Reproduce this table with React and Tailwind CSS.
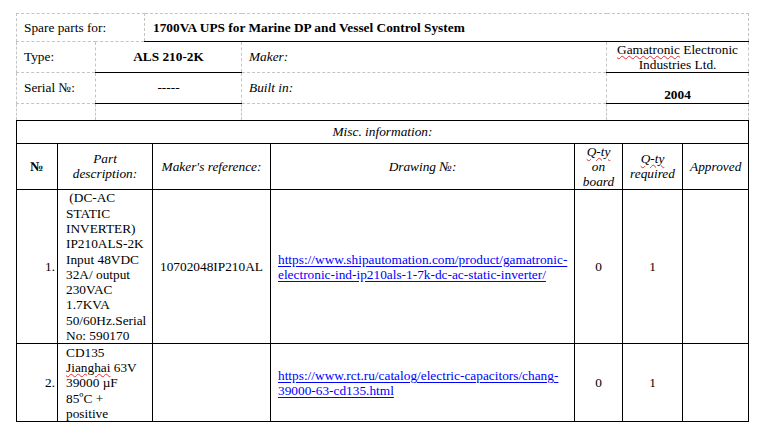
import React from "react";

// Word-style spare parts sheet: dashed gridline header block + solid parts table
const dash = "border border-dashed border-[#c4c4c4] px-[7px] align-middle";
const solidBottom = "[border-bottom-style:solid]! border-b-black";
const cell = "border border-black px-[7px] align-middle";

const Wavy = ({ children }) => (
  <span className="underline decoration-wavy decoration-[#e03030] decoration-[1px] underline-offset-[1px]">
    {children}
  </span>
);

const parts = [
  {
    no: "1.",
    desc: ["\u00a0(DC-AC", "STATIC", "INVERTER)", "IP210ALS-2K", "Input 48VDC", "32A/ output", "230VAC", "1.7KVA", "50/60Hz.Serial", "No: 590170"],
    ref: "10702048IP210AL",
    link: ["https://www.shipautomation.com/product/gamatronic-", "electronic-ind-ip210als-1-7k-dc-ac-static-inverter/"],
    onBoard: 0,
    required: 1,
    h: "h-[154px]",
  },
  {
    no: "2.",
    desc: ["CD135", <><Wavy>Jianghai</Wavy> 63V</>, "39000 µF", "85ºC +", "positive"],
    ref: "",
    link: ["https://www.rct.ru/catalog/electric-capacitors/chang-", "39000-63-cd135.html"],
    onBoard: 0,
    required: 1,
    h: "h-[78px]",
  },
];

export default function App() {
  return (
    <div className="w-[759px] h-[443px] bg-white pl-4 pt-[13px] font-['Liberation_Serif',serif] text-[13.33px] leading-[15.3px] text-black">
      <table className="w-[732px] table-fixed border-collapse">
        <colgroup>
          <col className="w-[79px]" />
          <col className="w-[49px]" />
          <col className="w-[97px]" />
          <col className="w-[365px]" />
          <col className="w-[142px]" />
        </colgroup>
        <tbody>
          <tr className="h-[28px]">
            <td colSpan={2} className={dash}>Spare parts for:</td>
            <td colSpan={3} className={`${dash} ${solidBottom} pl-[8px] font-bold`}>
              1700VA UPS for Marine DP and Vessel Control System
            </td>
          </tr>
          <tr className="h-[31px]">
            <td className={dash}>Type:</td>
            <td colSpan={2} className={`${dash} ${solidBottom} text-center font-bold`}>ALS 210-2K</td>
            <td className={`${dash} italic`}>Maker:</td>
            <td className={`${dash} ${solidBottom} text-center align-top! pt-0 leading-[15px]`}>
              <div><Wavy>Gamatronic</Wavy> Electronic</div>
              <div>Industries Ltd.</div>
            </td>
          </tr>
          <tr className="h-[31px]">
            <td className={dash}>Serial №:</td>
            <td colSpan={2} className={`${dash} ${solidBottom} text-center`}>-----</td>
            <td className={`${dash} italic`}>Built in:</td>
            <td className={`${dash} ${solidBottom} text-center font-bold align-bottom! pb-px`}>2004</td>
          </tr>
          <tr className="h-[16px]">
            <td className={`${dash} border-b-0`}></td>
            <td colSpan={2} className={`${dash} border-b-0`}></td>
            <td className={`${dash} border-b-0`}></td>
            <td className={`${dash} border-b-0`}></td>
          </tr>
        </tbody>
      </table>

      <table className="w-[732px] table-fixed border-collapse">
        <colgroup>
          <col className="w-[41px]" />
          <col className="w-[95px]" />
          <col className="w-[118px]" />
          <col className="w-[304px]" />
          <col className="w-[48px]" />
          <col className="w-[60px]" />
          <col className="w-[66px]" />
        </colgroup>
        <tbody>
          <tr className="h-[23px]">
            <td colSpan={7} className={`${cell} text-center italic`}>Misc. information:</td>
          </tr>
          <tr className="h-[46px] italic text-center">
            <td className={`${cell} not-italic font-bold px-0`}>№</td>
            <td className={`${cell} px-1`}>Part<br />description:</td>
            <td className={`${cell} px-1`}>Maker's reference:</td>
            <td className={cell}>Drawing №:</td>
            <td className={`${cell} px-0`}><Wavy>Q-ty</Wavy><br />on<br />board</td>
            <td className={`${cell} px-0`}><Wavy>Q-ty</Wavy><br />required</td>
            <td className={`${cell} px-0`}>Approved</td>
          </tr>
          {parts.map((p) => (
            <tr key={p.no} className={p.h}>
              <td className={`${cell} text-right pr-[2px]`}>{p.no}</td>
              <td className={`${cell} pl-[8px] pr-0 whitespace-nowrap`}>
                {p.desc.map((line, i) => (
                  <div key={i}>{line}</div>
                ))}
              </td>
              <td className={`${cell} text-center px-1`}>{p.ref}</td>
              <td className={`${cell} whitespace-nowrap`}>
                <a href="#" className="text-[#0000ff] underline underline-offset-[2px]">
                  {p.link[0]}
                  <br />
                  {p.link[1]}
                </a>
              </td>
              <td className={`${cell} text-center px-0`}>{p.onBoard}</td>
              <td className={`${cell} text-center px-0`}>{p.required}</td>
              <td className={cell}></td>
            </tr>
          ))}
        </tbody>
      </table>
    </div>
  );
}
